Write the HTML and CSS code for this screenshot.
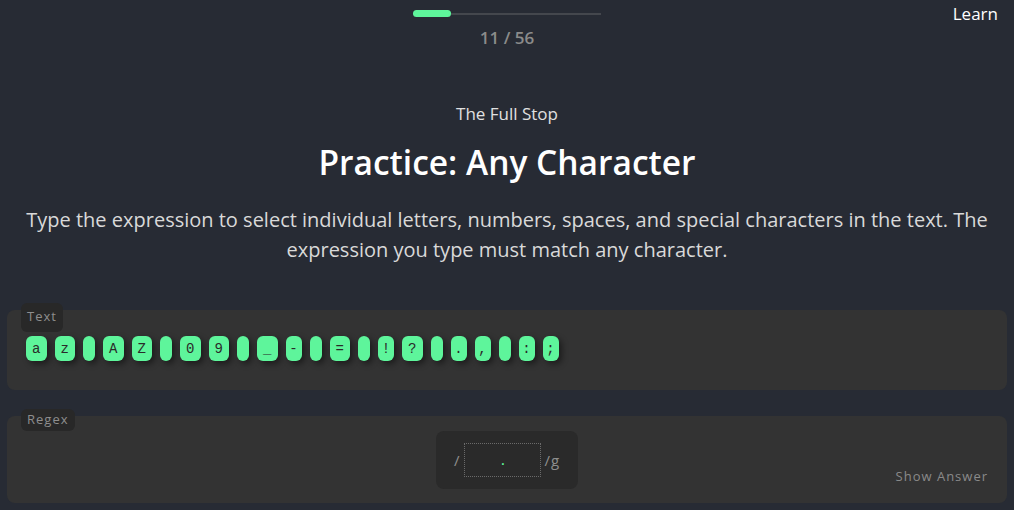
FILE: index.html
```html
<!DOCTYPE html>
<html lang="en">
<head>
<meta charset="utf-8">
<title>Practice: Any Character</title>
<link rel="stylesheet" href="styles.css">
</head>
<body>
<header class="top">
  <div class="spacer"></div>
  <div class="progress">
    <div class="track"><div class="fill" style="width: 38px"></div></div>
    <div class="count">11 / 56</div>
  </div>
  <a class="learn" href="#">Learn</a>
</header>
<main>
  <section class="intro">
    <div class="subtitle">The Full Stop</div>
    <h1 class="title">Practice: Any Character</h1>
    <p class="desc">Type the expression to select individual letters, numbers, spaces, and special characters in the text. The expression you type must match any character.</p>
  </section>
  <section class="panel text-panel">
    <div class="tag">Text</div>
    <div class="chars">
      <span class="ch">a</span><span class="ch">z</span><span class="ch sp"></span><span class="ch">A</span><span class="ch">Z</span><span class="ch sp"></span><span class="ch">0</span><span class="ch">9</span><span class="ch sp"></span><span class="ch">_</span><span class="ch n">-</span><span class="ch sp"></span><span class="ch">=</span><span class="ch sp"></span><span class="ch n">!</span><span class="ch">?</span><span class="ch sp"></span><span class="ch n">.</span><span class="ch n">,</span><span class="ch sp"></span><span class="ch n">:</span><span class="ch n">;</span>
    </div>
  </section>
  <section class="panel regex-panel">
    <div class="tag tag-sm">Regex</div>
    <div class="regex-input">
      <span class="slash">/</span>
      <span class="field">.</span>
      <span class="slash">/g</span>
    </div>
    <a class="show" href="#">Show Answer</a>
  </section>
</main>
</body>
</html>
```
FILE: styles.css
```css
* { box-sizing: border-box; }
html, body { margin: 0; padding: 0; }
body {
  background: #272b34;
  color: #e6e6e6;
  font-family: "Open Sans", "Liberation Sans", sans-serif;
  width: 1014px;
  height: 510px;
  overflow: hidden;
}
a { text-decoration: none; }

.top {
  display: grid;
  grid-template-columns: 1fr 188px 1fr;
  align-items: start;
  height: 60px;
}
.progress {
  padding-top: 10px;
  display: flex;
  flex-direction: column;
  align-items: stretch;
}
.track {
  height: 7px;
  position: relative;
  display: flex;
  align-items: center;
}
.track::before {
  content: "";
  position: absolute;
  left: 0; right: 0; top: 3px;
  height: 2px;
  background: #44474d;
}
.fill {
  position: relative;
  height: 7px;
  border-radius: 4px;
  background: #5ef59b;
}
.count {
  margin-top: 10px;
  text-align: center;
  font-size: 17px;
  font-weight: 600;
  color: #8b8b8b;
  line-height: 22px;
}
.learn {
  justify-self: end;
  margin-right: 16px;
  margin-top: 2px;
  color: #ffffff;
  font-size: 17px;
  line-height: 23px;
}

.intro {
  text-align: center;
  padding: 42px 20px 0;
}
.subtitle {
  font-size: 17px;
  line-height: 24px;
  color: #e0e0e0;
}
.title {
  margin: 14px 0 0;
  font-size: 33.5px;
  font-weight: 600;
  line-height: 44px;
  color: #ffffff;
}
.desc {
  margin: 21px 0 0;
  font-size: 20px;
  line-height: 30px;
  color: #d9d9d9;
}

.panel {
  position: relative;
  margin: 0 7px;
  background: #333333;
  border-radius: 8px;
}
.tag {
  position: absolute;
  left: 14px;
  top: -7px;
  padding: 6px 6px 8px;
  background: #282828;
  border-radius: 6px;
  font-size: 13px;
  letter-spacing: 1px;
  line-height: 15px;
  color: #8e8e8e;
}
.tag-sm { padding: 3px 6px 4px; }

.text-panel {
  margin-top: 45px;
  height: 80px;
  padding: 26px 19px 0;
}
.chars {
  display: flex;
  gap: 8px;
}
.ch {
  height: 25px;
  width: 20.5px;
  display: flex;
  align-items: center;
  justify-content: center;
  background: #5ef59b;
  border-radius: 6px;
  box-shadow: 3px 3px 6px rgba(0, 0, 0, 0.45);
  font-family: "Liberation Mono", "DejaVu Sans Mono", monospace;
  font-size: 14px;
  color: #2a2a2a;
}
.ch.n { width: 16px; }
.ch.sp { width: 12px; }

.regex-panel {
  margin-top: 26px;
  height: 87px;
  padding-top: 15px;
  display: flex;
  justify-content: center;
  align-items: flex-start;
}
.regex-input {
  width: 142px;
  height: 58px;
  background: #2a2a2a;
  border-radius: 8px;
  display: flex;
  align-items: center;
  justify-content: center;
  gap: 3px;
}
.slash {
  font-size: 15px;
  color: #8e8e8e;
  letter-spacing: 1px;
}
.field {
  width: 77px;
  height: 34px;
  border: 1px dotted #6a6a6a;
  display: flex;
  align-items: center;
  justify-content: center;
  color: #5ef59b;
  font-family: "DejaVu Sans Mono", monospace;
  font-size: 13px;
  margin-left: 1px;
}
.show {
  position: absolute;
  right: 19px;
  bottom: 18px;
  font-size: 13px;
  letter-spacing: 1px;
  line-height: 18px;
  color: #8a8a8a;
}
```
